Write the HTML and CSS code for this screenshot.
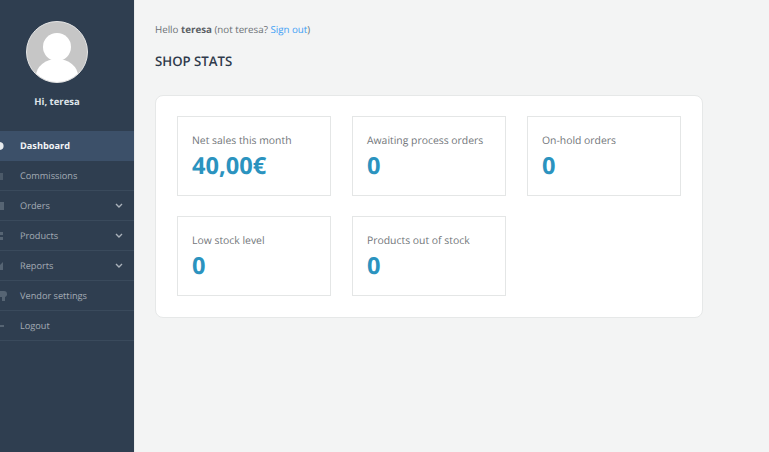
FILE: index.html
```html
<!DOCTYPE html>
<html lang="en">
<head>
<meta charset="utf-8">
<title>Shop stats</title>
<link rel="stylesheet" href="styles.css">
</head>
<body>
<div class="layout">
  <aside class="sidebar">
    <div class="profile">
      <svg class="avatar" viewBox="0 0 62 62" width="62" height="62">
        <defs><clipPath id="c"><circle cx="31" cy="31" r="30"/></clipPath></defs>
        <circle cx="31" cy="31" r="30.5" fill="#c6c6c6" stroke="#e4e4e4"/>
        <g clip-path="url(#c)" fill="#fff">
          <circle cx="31" cy="26" r="14"/>
          <ellipse cx="31" cy="55" rx="21" ry="17"/>
        </g>
      </svg>
      <div class="hi">Hi, teresa</div>
    </div>
    <nav class="menu">
      <a class="item active"><span class="ico"><svg viewBox="0 0 4 10" width="4" height="10"><path d="M0 1a4 4 0 0 1 3.600 4A4 4 0 0 1 0 9z" fill="#e8ebee"/></svg></span>Dashboard</a>
      <a class="item"><span class="ico"><svg viewBox="0 0 4 10" width="4" height="10"><rect y="2" width="3" height="7" fill="#4c5a69"/></svg></span>Commissions</a>
      <a class="item"><span class="ico"><svg viewBox="0 0 4 10" width="4" height="10"><rect y="1" width="4" height="8" fill="#566473"/></svg></span>Orders<svg class="chev" viewBox="0 0 8 5" width="8" height="5"><path d="M1 1l3 3 3-3" fill="none" stroke="#a9b1ba" stroke-width="1.4"/></svg></a>
      <a class="item"><span class="ico"><svg viewBox="0 0 4 10" width="4" height="10"><path d="M0 1h3v3H0zM0 6h3v3H0z" fill="#566473"/></svg></span>Products<svg class="chev" viewBox="0 0 8 5" width="8" height="5"><path d="M1 1l3 3 3-3" fill="none" stroke="#a9b1ba" stroke-width="1.4"/></svg></a>
      <a class="item"><span class="ico"><svg viewBox="0 0 4 10" width="4" height="10"><path d="M0 9V4l3-3v8z" fill="#566473"/></svg></span>Reports<svg class="chev" viewBox="0 0 8 5" width="8" height="5"><path d="M1 1l3 3 3-3" fill="none" stroke="#a9b1ba" stroke-width="1.4"/></svg></a>
      <a class="item"><span class="ico"><svg viewBox="0 0 8 12" width="8" height="12"><path d="M0 1h4a3 3 0 0 1 3 3v1a3 3 0 0 1-2 2v4H2V7H0z" fill="#566473"/></svg></span>Vendor settings</a>
      <a class="item"><span class="ico"><svg viewBox="0 0 4 10" width="4" height="10"><rect y="4" width="4" height="2" fill="#566473"/></svg></span>Logout</a>
    </nav>
  </aside>
  <main class="content">
    <p class="hello">Hello <strong>teresa</strong> (not teresa? <a class="link">Sign out</a>)</p>
    <h2 class="title">SHOP STATS</h2>
    <section class="panel">
      <div class="stat"><div class="label">Net sales this month</div><div class="value">40,00€</div></div>
      <div class="stat"><div class="label">Awaiting process orders</div><div class="value">0</div></div>
      <div class="stat"><div class="label">On-hold orders</div><div class="value">0</div></div>
      <div class="stat"><div class="label">Low stock level</div><div class="value">0</div></div>
      <div class="stat"><div class="label">Products out of stock</div><div class="value">0</div></div>
    </section>
  </main>
</div>
</body>
</html>
```
FILE: styles.css
```css
* { box-sizing: border-box; }
html, body { margin: 0; height: 100%; overflow: hidden; }
body { font-family: "Open Sans", "Liberation Sans", sans-serif; background: #f3f4f4; color: #666; text-rendering: geometricPrecision; }
.layout { display: flex; height: 452px; }
.sidebar { width: 135px; flex: none; background: #2f3e50; border-right: 1px solid #e9ebeb; padding-top: 21px; }
.profile { width: 114px; display: flex; flex-direction: column; align-items: center; }
.avatar { display: block; }
.hi { margin-top: 11px; font-size: 9.500px; line-height: 15px; font-weight: 700; color: #dfe4e9; }
.menu { margin-top: 22px; display: flex; flex-direction: column; }
.item { display: flex; align-items: center; height: 30px; font-size: 9.200px; color: #a3abb4; border-bottom: 1px solid #3a4a5c; position: relative; }
.item.active { background: #3c5069; color: #f2f4f6; font-weight: 700; border-bottom-color: #3c5069; }
.ico { width: 20px; flex: none; display: flex; align-items: center; }
.ico svg { display: block; }
.chev { position: absolute; right: 11px; top: 12px; }
.content { flex: 1; padding: 23px 0 0 20px; }
.hello { margin: 0; font-size: 9.750px; line-height: 14px; color: #6c7175; }
.hello strong { color: #5c6166; }
.link { color: #3ea0f5; }
.title { margin: 15px 0 0; font-size: 13.200px; line-height: 18px; font-weight: 600; color: #2f3a4b; }
.panel { margin-top: 25px; width: 548px; height: 223px; background: #fff; border: 1px solid #e6e8e8; border-radius: 8px; padding: 20px 21px; display: grid; grid-template-columns: repeat(3, 154px); grid-auto-rows: 80px; column-gap: 21px; row-gap: 20px; }
.stat { border: 1px solid #e4e6e6; padding: 17px 14px 0; }
.label { font-size: 10.400px; line-height: 14px; color: #72767a; }
.value { margin-top: 4px; font-size: 23.600px; line-height: 26px; font-weight: 700; color: #2b93bf; }
```
